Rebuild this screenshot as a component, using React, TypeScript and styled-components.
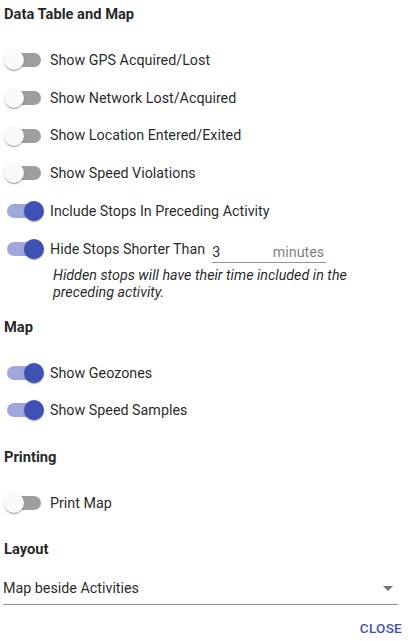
import { createGlobalStyle, styled } from "styled-components";

const GlobalStyle = createGlobalStyle`
  html, body {
    margin: 0;
    padding: 0;
    background: #fff;
  }
  body {
    font-family: Roboto, "Liberation Sans", sans-serif;
    color: rgba(0, 0, 0, 0.87);
  }
`;

const INDIGO = "#3f51b5";

type Option = { label: string; checked: boolean };

const tableOptions: Option[] = [
  { label: "Show GPS Acquired/Lost", checked: false },
  { label: "Show Network Lost/Acquired", checked: false },
  { label: "Show Location Entered/Exited", checked: false },
  { label: "Show Speed Violations", checked: false },
  { label: "Include Stops In Preceding Activity", checked: true },
];

const mapOptions: Option[] = [
  { label: "Show Geozones", checked: true },
  { label: "Show Speed Samples", checked: true },
];

const Toggle = ({ checked }: { checked: boolean }) => (
  <SwitchRoot>
    <Track checked={checked} />
    <Thumb checked={checked} />
  </SwitchRoot>
);

const SwitchRow = ({ label, checked }: Option) => (
  <Row>
    <Toggle checked={checked} />
    <Label>{label}</Label>
  </Row>
);

const App = () => {
  return (
    <Page>
      <GlobalStyle />
      <Heading>Data Table and Map</Heading>
      {tableOptions.map((o) => (
        <SwitchRow key={o.label} {...o} />
      ))}
      <Row>
        <Toggle checked={true} />
        <Label>Hide Stops Shorter Than</Label>
        <Field>
          <FieldValue>3</FieldValue>
          <Adornment>minutes</Adornment>
        </Field>
      </Row>
      <Helper>
        Hidden stops will have their time included in the preceding activity.
      </Helper>

      <Heading top={16}>Map</Heading>
      {mapOptions.map((o) => (
        <SwitchRow key={o.label} {...o} />
      ))}

      <Heading top={18}>Printing</Heading>
      <SwitchRow label="Print Map" checked={false} />

      <Heading top={17}>Layout</Heading>
      <Select>
        <SelectValue>Map beside Activities</SelectValue>
        <svg width="10" height="5" viewBox="0 0 10 5">
          <path d="M0 0l5 5 5-5z" fill="rgba(0,0,0,0.54)" />
        </svg>
      </Select>

      <Actions>
        <TextButton>Close</TextButton>
      </Actions>
    </Page>
  );
};

export default App;

const Page = styled.div`
  width: 408px;
  height: 641px;
  box-sizing: border-box;
  padding: 4px 10px 0 3px;
  display: flex;
  flex-direction: column;
  overflow: hidden;
`;

const Heading = styled.div<{ top?: number }>`
  font-size: 14.7px;
  line-height: 20px;
  font-weight: 700;
  margin: ${(p) => p.top ?? 0}px 0 17px 1px;
`;

const Row = styled.div`
  display: flex;
  align-items: center;
  height: 37.8px;
  margin-left: -11px;
`;

const SwitchRoot = styled.span`
  position: relative;
  width: 58px;
  height: 38px;
  flex-shrink: 0;
`;

const Track = styled.span<{ checked: boolean }>`
  position: absolute;
  left: 15px;
  top: 12px;
  width: 34px;
  height: 14px;
  border-radius: 7px;
  background: ${(p) => (p.checked ? INDIGO : "#000")};
  opacity: ${(p) => (p.checked ? 0.5 : 0.38)};
`;

const Thumb = styled.span<{ checked: boolean }>`
  position: absolute;
  top: 9px;
  left: ${(p) => (p.checked ? 32 : 12)}px;
  width: 20px;
  height: 20px;
  border-radius: 50%;
  background: ${(p) => (p.checked ? INDIGO : "#fafafa")};
  box-shadow: 0 2px 1px -1px rgba(0, 0, 0, 0.2), 0 1px 1px 0 rgba(0, 0, 0, 0.14),
    0 1px 3px 0 rgba(0, 0, 0, 0.12);
`;

const Label = styled.span`
  font-size: 14.3px;
  line-height: 20px;
`;

const Field = styled.span`
  display: flex;
  align-items: center;
  justify-content: space-between;
  width: 114px;
  margin: 6px 0 0 7px;
  padding: 12px 0 6px;
  height: 27px;
  box-sizing: border-box;
  border-bottom: 1px solid rgba(0, 0, 0, 0.42);
  font-size: 14.3px;
  line-height: 14px;
  align-self: flex-start;
`;

const FieldValue = styled.span`
  color: rgba(0, 0, 0, 0.87);
`;

const Adornment = styled.span`
  color: rgba(0, 0, 0, 0.54);
  margin-right: 2px;
`;

const Helper = styled.div`
  font-size: 14.3px;
  line-height: 17px;
  font-style: italic;
  margin: -1px 40px 0 50px;
`;

const Select = styled.div`
  display: flex;
  align-items: center;
  justify-content: space-between;
  margin-top: -1px;
  padding: 4px 5px 6px 0;
  border-bottom: 1px solid rgba(0, 0, 0, 0.42);
`;

const SelectValue = styled.span`
  font-size: 14.3px;
  line-height: 19px;
`;

const Actions = styled.div`
  display: flex;
  justify-content: flex-end;
  margin: 12px -4px 0 0;
`;

const TextButton = styled.button`
  border: none;
  background: none;
  padding: 0;
  font-family: Roboto, "Liberation Sans", sans-serif;
  font-size: 13.5px;
  font-weight: 500;
  line-height: 22px;
  letter-spacing: 0.02em;
  text-transform: uppercase;
  color: ${INDIGO};
  cursor: pointer;
`;
